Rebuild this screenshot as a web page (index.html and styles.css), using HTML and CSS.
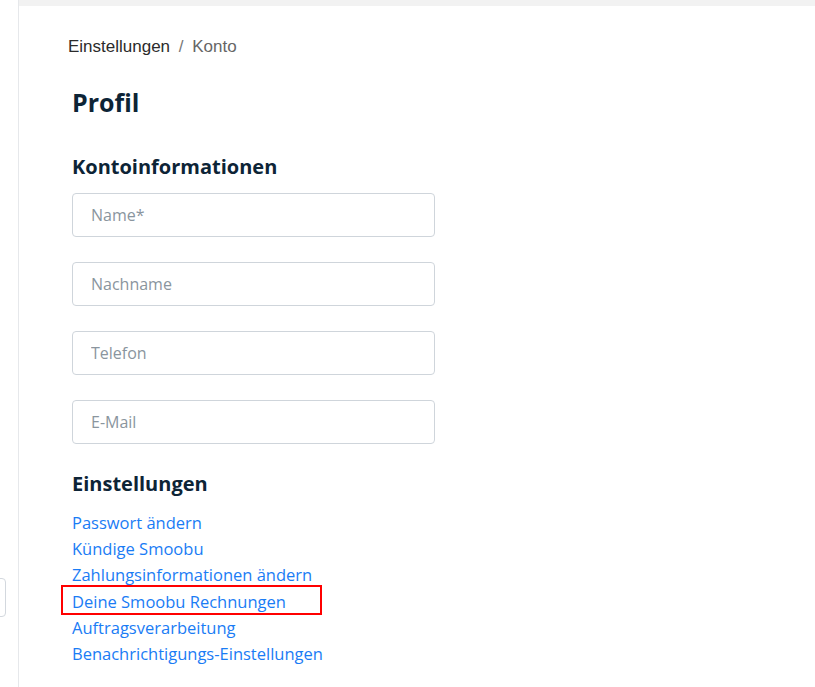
FILE: index.html
```html
<!DOCTYPE html>
<html>
<head>
  <title>Konto - Einstellungen</title>
  <meta charset="UTF-8" />
  <link rel="stylesheet" href="styles.css">
</head>
<body>
  <div class="layout">
    <aside class="sidebar">
      <div class="sidebar-tab"></div>
    </aside>

    <main class="main">
      <div class="topbar"></div>

      <div class="content">
        <div class="breadcrumb">
          <span class="crumb">Einstellungen</span>
          <span class="sep">/</span>
          <span class="crumb current">Konto</span>
        </div>

        <h1>Profil</h1>

        <h2>Kontoinformationen</h2>
        <form class="account-form">
          <input type="text" placeholder="Name*" />
          <input type="text" placeholder="Nachname" />
          <input type="text" placeholder="Telefon" />
          <input type="email" placeholder="E-Mail" />
        </form>

        <h2 class="settings-title">Einstellungen</h2>
        <ul class="settings-links">
          <li><a href="#">Passwort ändern</a></li>
          <li><a href="#">Kündige Smoobu</a></li>
          <li><a href="#">Zahlungsinformationen ändern</a></li>
          <li class="highlighted"><a href="#">Deine Smoobu Rechnungen</a></li>
          <li><a href="#">Auftragsverarbeitung</a></li>
          <li><a href="#">Benachrichtigungs-Einstellungen</a></li>
        </ul>
      </div>
    </main>
  </div>
</body>
</html>
```

FILE: styles.css
```css
body { margin: 0; font-family: "Open Sans", "Noto Sans", sans-serif; color: #0d2436; background: #fff; }
.layout { display: flex; min-height: 687px; }
.sidebar { width: 18px; border-right: 1px solid #e6e8eb; overflow: hidden; flex-shrink: 0; }
.sidebar-tab { margin-top: 578px; margin-left: -20px; width: 24px; height: 37px; border: 1px solid #d3d8de; border-radius: 4px; }
.main { flex: 1; }
.topbar { height: 6px; background: #f2f2f2; }
.content { padding: 31px 0 0 53px; }
.breadcrumb { font-family: "Liberation Sans", Arial, sans-serif; font-size: 17px; color: #2b2b2b; margin-left: -4px; }
.breadcrumb .sep { color: #777; margin: 0 4px; }
.breadcrumb .current { color: #666; }
h1 { font-size: 25px; font-weight: 700; margin: 28px 0 0; line-height: 34px; }
h2 { font-size: 20px; font-weight: 700; margin: 34px 0 12px; line-height: 28px; }
.account-form { display: flex; flex-direction: column; gap: 25px; width: 363px; }
.account-form input { height: 44px; box-sizing: border-box; border: 1px solid #cfd5db; border-radius: 4px; padding: 0 18px; font-family: inherit; font-size: 16px; color: #333; margin: 0; }
.account-form input::placeholder { color: #8a959e; }
.settings-title { margin: 26px 0 12px; }
.settings-links { list-style: none; margin: 0; padding: 0; }
.settings-links li { line-height: 26.2px; font-size: 16.5px; }
.settings-links a { color: #1a7cf5; text-decoration: none; }
.settings-links .highlighted { position: relative; }
.settings-links .highlighted::after { content: ""; position: absolute; left: -11px; top: -4px; width: 261px; height: 30px; box-sizing: border-box; border: 2px solid #f00; }
```
